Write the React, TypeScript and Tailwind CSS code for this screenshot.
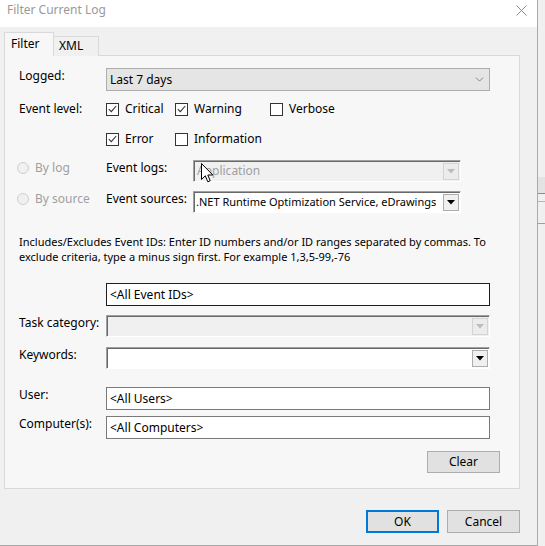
import { ChevronDown } from 'lucide-react';

function Check({ checked }: { checked?: boolean }) {
    return (
        <span className="w-[13px] h-[13px] border border-[#333] bg-white flex items-center justify-center shrink-0">
            {checked && (
                <svg width="9" height="8" viewBox="0 0 9 8">
                    <path d="M0.8 4.2 L3.3 6.6 L8.2 1" fill="none" stroke="#333" strokeWidth="1.1" />
                </svg>
            )}
        </span>
    );
}

function CheckItem({ label, checked, width }: { label: string; checked?: boolean; width: string }) {
    return (
        <div className={`flex items-center h-[16px] ${width}`}>
            <Check checked={checked} />
            <span className="ml-[6px]">{label}</span>
        </div>
    );
}

function Radio({ label }: { label: string }) {
    return (
        <div className="flex items-center w-[101px] shrink-0 pl-[12px] text-[#a0a0a0] leading-[16px]">
            <span className="w-[12px] h-[12px] rounded-full border border-[#cfcfcf] bg-[#f0f0f0] shrink-0" />
            <span className="ml-[6px]">{label}</span>
        </div>
    );
}

function DropBtn({ disabled }: { disabled?: boolean }) {
    return (
        <span className={`w-[16px] h-[17px] mr-[1px] border flex items-center justify-center shrink-0 ${disabled ? 'border-[#d4d4d4] bg-[#ececec]' : 'border-[#adadad] bg-[#f0f0f0]'}`}>
            <svg width="8" height="5" viewBox="0 0 8 5">
                <path d="M0 0 L8 0 L4 4.5 Z" fill={disabled ? '#bcbcbc' : '#000'} />
            </svg>
        </span>
    );
}

function Sunken({ children, white, className }: { children?: React.ReactNode; white?: boolean; className: string }) {
    return (
        <div className={`h-[22px] flex items-center justify-between border border-t-[#a0a0a0] border-l-[#a0a0a0] border-b-[#fff] border-r-[#fff] shadow-[inset_1px_1px_0_#696969] ${white ? 'bg-white' : 'bg-[#f0f0f0]'} ${className}`}>
            {children}
        </div>
    );
}

function TextBox({ value, dark }: { value: string; dark?: boolean }) {
    return (
        <div className={`w-[384px] h-[23px] bg-white border flex items-center pl-[3px] ${dark ? 'border-[#1e1e1e]' : 'border-[#7a7a7a]'}`}>
            {value}
        </div>
    );
}

function Label({ text }: { text: string }) {
    return <div className="w-[87px] shrink-0 leading-[16px]">{text}</div>;
}

export default function App() {
    return (
        <div className="w-[545px] h-[546px] flex font-['Segoe_UI','Noto_Sans',sans-serif] text-[12px] text-black bg-[#f0f0f0] overflow-hidden">
            {/* dialog */}
            <div className="relative w-[538px] h-[546px] flex flex-col bg-[#f0f0f0] border-r border-b border-[#aaaaaa]">
                <div className="h-[27px] bg-white flex items-start justify-between pl-[7px] pr-[10px] pt-[2px] shrink-0">
                    <span className="text-[#999999] text-[12px] leading-[16px]">Filter Current Log</span>
                    <svg className="mt-[3px]" width="11" height="11" viewBox="0 0 11 11">
                        <path d="M0.5 0.5 L10.5 10.5 M10.5 0.5 L0.5 10.5" stroke="#8a8a8a" strokeWidth="1" />
                    </svg>
                </div>

                <div className="flex items-end mt-[5px] ml-[4px] h-[24px] relative z-10">
                    <div className="w-[50px] h-[24px] border border-b-0 border-[#d9d9d9] bg-[#f7f7f7] pl-[6px] pt-[2px]">Filter</div>
                    <div className="w-[45px] h-[20px] border border-l-0 border-b-0 border-[#d9d9d9] bg-[#f0f0f0] pl-[5px] leading-[18px]">XML</div>
                </div>

                <div className="ml-[4px] -mt-[1px] w-[516px] h-[434px] border border-[#d9d9d9] bg-[#f7f7f7] pl-[14px] pt-[12px] flex flex-col">
                    <div className="flex items-start h-[23px]">
                        <Label text="Logged:" />
                        <div className="w-[384px] h-[23px] bg-[#e5e5e5] border border-[#adadad] flex items-center justify-between pl-[3px] pr-[3px]">
                            <span>Last 7 days</span>
                            <ChevronDown size={13} strokeWidth={1.2} color="#555" />
                        </div>
                    </div>

                    <div className="flex items-center h-[16px] mt-[10px]">
                        <Label text="Event level:" />
                        <CheckItem label="Critical" checked width="w-[69px]" />
                        <CheckItem label="Warning" checked width="w-[95px]" />
                        <CheckItem label="Verbose" width="w-[80px]" />
                    </div>
                    <div className="flex items-center h-[16px] mt-[14px] pl-[87px]">
                        <CheckItem label="Error" checked width="w-[69px]" />
                        <CheckItem label="Information" width="w-[95px]" />
                    </div>

                    <div className="flex items-start h-[22px] mt-[13px] -ml-[14px]">
                        <Radio label="By log" />
                        <Label text="Event logs:" />
                        <Sunken className="w-[268px]">
                            <span className="pl-[3px] text-[#a0a0a0]">Application</span>
                            <DropBtn disabled />
                        </Sunken>
                    </div>
                    <div className="flex items-start h-[22px] mt-[9px] -ml-[14px]">
                        <Radio label="By source" />
                        <Label text="Event sources:" />
                        <Sunken white className="w-[268px]">
                            <span className="pl-[2px] text-[11px] whitespace-nowrap overflow-hidden">.NET Runtime Optimization Service, eDrawings</span>
                            <DropBtn />
                        </Sunken>
                    </div>

                    <p className="mt-[21px] text-[11px] leading-[15px] whitespace-nowrap">
                        Includes/Excludes Event IDs: Enter ID numbers and/or ID ranges separated by commas. To
                        <br />
                        exclude criteria, type a minus sign first. For example 1,3,5-99,-76
                    </p>

                    <div className="flex items-start mt-[19px]">
                        <div className="w-[87px] shrink-0" />
                        <TextBox value="<All Event IDs>" dark />
                    </div>

                    <div className="flex items-start h-[22px] mt-[9px]">
                        <Label text="Task category:" />
                        <Sunken className="w-[384px]">
                            <span />
                            <DropBtn disabled />
                        </Sunken>
                    </div>
                    <div className="flex items-start h-[22px] mt-[10px]">
                        <Label text="Keywords:" />
                        <Sunken white className="w-[384px]">
                            <span />
                            <DropBtn />
                        </Sunken>
                    </div>

                    <div className="flex items-start h-[23px] mt-[18px]">
                        <Label text="User:" />
                        <TextBox value="<All Users>" />
                    </div>
                    <div className="flex items-start h-[23px] mt-[6px]">
                        <Label text="Computer(s):" />
                        <TextBox value="<All Computers>" />
                    </div>

                    <div className="flex justify-end mt-[12px] pr-[19px]">
                        <button className="w-[73px] h-[22px] bg-[#e1e1e1] border border-[#adadad]">Clear</button>
                    </div>
                </div>

                <div className="flex justify-end gap-[8px] mt-[21px] pr-[17px]">
                    <button className="w-[73px] h-[23px] bg-[#e1e1e1] border-2 border-[#0078d7]">OK</button>
                    <button className="w-[73px] h-[23px] bg-[#e1e1e1] border border-[#adadad]">Cancel</button>
                </div>

                {/* mouse pointer */}
                <svg className="absolute left-[201px] top-[163px]" width="13" height="20" viewBox="0 0 13 20">
                    <path d="M0.5 0.5 L0.5 16.5 L4.3 12.8 L6.8 18.8 L9.2 17.8 L6.8 12 L11.8 12 Z" fill="#fff" stroke="#000" strokeWidth="1" strokeLinejoin="round" />
                </svg>
            </div>

            {/* window behind */}
            <div className="w-[7px] flex flex-col">
                <div className="h-[177px] bg-[#f0f0f0]" />
                <div className="h-[16px] bg-[#e3e3e3]" />
                <div className="h-[1px] bg-[#8c8c8c]" />
                <div className="h-[7px] bg-[#f0f0f0]" />
                <div className="h-[1px] bg-[#b5b5b5]" />
                <div className="h-[21px] bg-[#f0f0f0]" />
                <div className="h-[1px] bg-[#a0a0a0]" />
                <div className="flex-1 bg-[#f0f0f0]" />
            </div>
        </div>
    );
}
